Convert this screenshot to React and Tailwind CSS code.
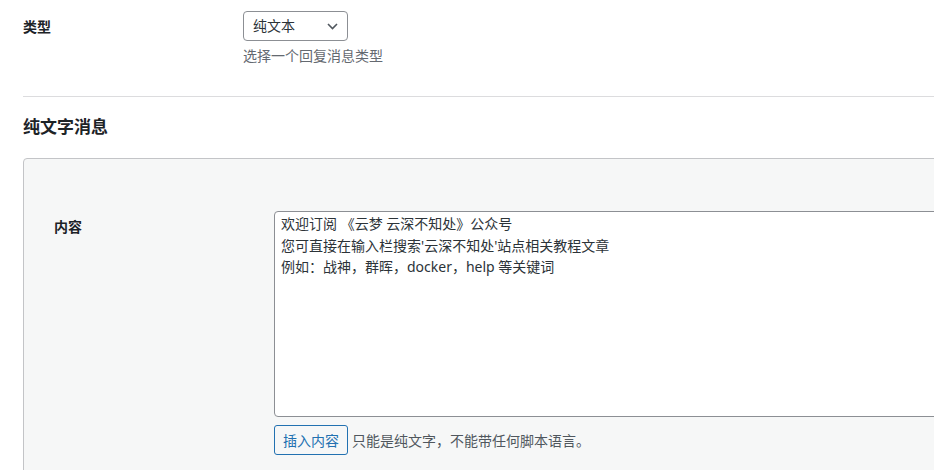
import React from "react";

export default function App() {
  const font = {
    fontFamily:
      '"Noto Sans", "Noto Sans CJK SC", sans-serif',
  };
  return (
    <div
      className="w-[934px] h-[470px] overflow-hidden bg-white text-[14px] text-[#1d2327]"
      style={font}
    >
      <div className="pl-[23px] w-[1100px]">
        {/* type row */}
        <div className="flex pt-[11px]">
          <div className="w-[220px] pt-[6px] font-bold leading-[20px] text-[14px]">类型</div>
          <div className="flex flex-col">
            <div className="w-[105px] h-[30px] border border-[#8c8f94] rounded-[4px] flex items-center justify-between pl-[9px] pr-[9px] bg-white">
              <span className="leading-[20px] text-[14px] text-[#2c3338]">纯文本</span>
              <svg width="11" height="7" viewBox="0 0 11 7" fill="none">
                <path d="M1 1l4.5 4.5L10 1" stroke="#50575e" strokeWidth="1.6" />
              </svg>
            </div>
            <div className="mt-[5px] leading-[20px] text-[14px] text-[#646970]">选择一个回复消息类型</div>
          </div>
        </div>
        <div className="mt-[30px] h-px bg-[#dcdcde]" />
        <h2 className="mt-[18px] text-[17px] leading-[24px] font-bold text-[#1d2327]">纯文字消息</h2>
        <div className="mt-[19px] border border-[#c3c4c7] rounded-tl-[4px] bg-[#f6f7f7] pl-[30px] pt-[52px] pb-[20px]">
          <div className="flex">
            <div className="w-[220px] pt-[6px] font-bold leading-[20px] text-[14px]">内容</div>
            <div className="flex flex-col">
              <div className="w-[760px] h-[206px] border border-[#8c8f94] rounded-[4px] bg-white px-[6px] pt-[1px] text-[#2c3338] text-[14px] leading-[21.5px]">
                <div>欢迎订阅 《云梦 云深不知处》公众号</div>
                <div>您可直接在输入栏搜索'云深不知处'站点相关教程文章</div>
                <div>例如：战神，群晖，docker，help 等关键词</div>
              </div>
              <div className="mt-[8px] flex items-center">
                <div className="h-[30px] w-[74px] justify-center border border-[#2271b1] rounded-[3px] bg-[#f6f7f7] text-[#2271b1] text-[14px] flex items-center">插入内容</div>
                <span className="ml-[4px] text-[#50575e] text-[14px]">只能是纯文字，不能带任何脚本语言。</span>
              </div>
            </div>
          </div>
        </div>
      </div>
    </div>
  );
}
